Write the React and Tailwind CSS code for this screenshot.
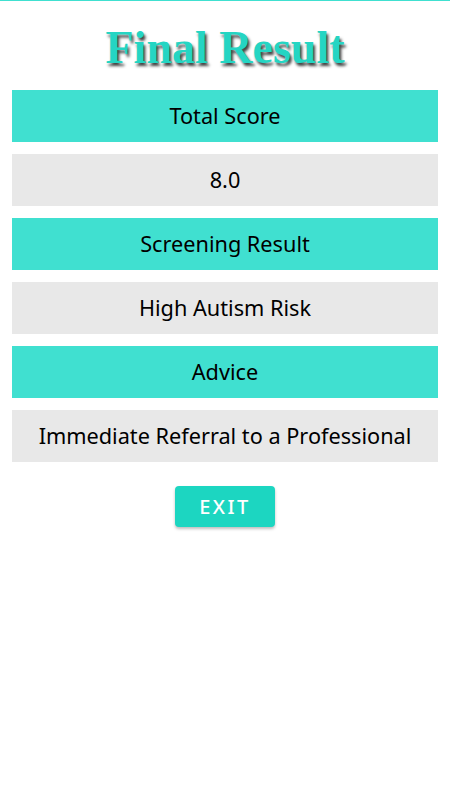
// Final result screen: score, screening result and advice rows, exit button.

const ROWS = [
  { label: 'Total Score', head: true },
  { label: '8.0' },
  { label: 'Screening Result', head: true },
  { label: 'High Autism Risk' },
  { label: 'Advice', head: true },
  { label: 'Immediate Referral to a Professional' },
]

export default function App() {
  return (
    <div className="w-[450px] h-[800px] bg-white border-t border-[#40e0d0] flex flex-col items-center font-['Noto_Sans',sans-serif]">
      <h1 className="mt-[22px] font-['Liberation_Serif',serif] text-[46px] leading-[50px] font-bold text-[#25d5c3] [text-shadow:2px_3px_3px_rgba(0,0,0,0.75)]">
        Final Result
      </h1>

      <div className="mt-[17px] w-[426px] flex flex-col gap-3">
        {ROWS.map(row => (
          <div
            key={row.label}
            className={row.head
              ? 'h-[52px] pt-px flex items-center justify-center text-[21.7px] text-black bg-[#40e0d0]'
              : 'h-[52px] pt-px flex items-center justify-center text-[21.7px] text-black bg-[#e8e8e8]'}
          >
            {row.label}
          </div>
        ))}
      </div>

      <button className="mt-6 w-[100px] h-[41px] rounded bg-[#1cd6c1] text-white text-[20px] font-medium tracking-[2.5px] shadow-[0_2px_3px_rgba(0,0,0,0.25)]">
        EXIT
      </button>
    </div>
  )
}
